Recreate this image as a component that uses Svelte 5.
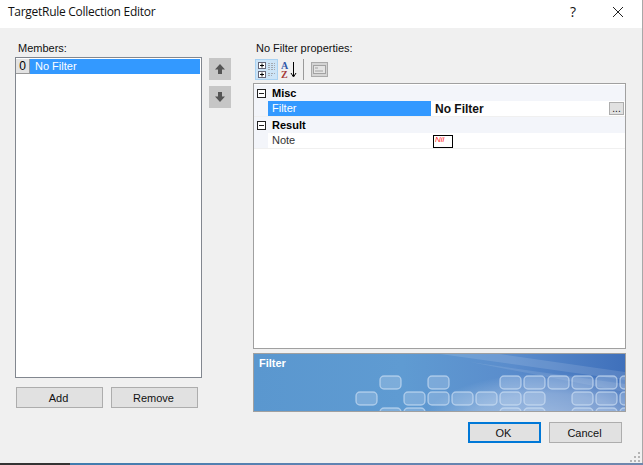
<script>
	let members = [{ index: 0, name: "No Filter" }];

	let groups = [
		{ name: "Misc", rows: [{ label: "Filter", value: "No Filter", selected: true }] },
		{ name: "Result", rows: [{ label: "Note", swatch: "Nil" }] }
	];

	// keys on the description banner, by row
	let keyRows = [
		{ y: 376, xs: [380, 428, 500, 524, 548, 572, 596, 620] },
		{ y: 392, xs: [356, 404, 428, 452, 476, 500, 524, 572, 596, 620] },
		{ y: 408, xs: [380, 404, 500, 524, 572, 596, 620] }
	];

	let grip = [[8, 0], [8, 4], [4, 4], [8, 8], [4, 8], [0, 8]];
</script>

<div class="page">
	<div class="dialog">
		<header class="titlebar">
			<span class="title">TargetRule Collection Editor</span>
			<span class="help">?</span>
			<svg class="close" width="12" height="12" viewBox="0 0 12 12">
				<path d="M1 1 L11 11 M11 1 L1 11" stroke="#222" stroke-width="1" fill="none" />
			</svg>
		</header>

		<div class="body">
			<section class="left">
				<div class="caption">Members:</div>
				<div class="list-row">
					<div class="listbox">
						{#each members as m}
							<div class="member">
								<span class="index">{m.index}</span>
								<span class="member-name">{m.name}</span>
							</div>
						{/each}
					</div>
					<div class="arrows">
						<button class="arrow" aria-label="Up">
							<svg width="12" height="12" viewBox="0 0 12 12"><path d="M6 1 L11 6.5 H8 V11 H4 V6.5 H1 Z" fill="#555" /></svg>
						</button>
						<button class="arrow" aria-label="Down">
							<svg width="12" height="12" viewBox="0 0 12 12"><path d="M6 11 L11 5.5 H8 V1 H4 V5.5 H1 Z" fill="#555" /></svg>
						</button>
					</div>
				</div>
				<div class="list-actions">
					<button class="btn">Add</button>
					<button class="btn">Remove</button>
				</div>
			</section>

			<section class="right">
				<div class="caption props-caption">No Filter properties:</div>
				<div class="toolbar">
					<span class="tool active">
						<svg width="20" height="18" viewBox="0 0 20 18">
							<rect x="1.5" y="1.5" width="7" height="6" fill="#fff" stroke="#667" />
							<path d="M3 4.5 H7 M5 2.5 V6.5" stroke="#000" />
							<rect x="1.5" y="10.5" width="7" height="6" fill="#fff" stroke="#667" />
							<path d="M3 13.5 H7 M5 11.5 V15.5" stroke="#000" />
							<path d="M11 2.5 H18 M11 4.5 H18 M11 6.5 H18 M11 8.5 H18 M11 12.5 H18 M11 14.5 H15" stroke="#a3a9b0" stroke-dasharray="2 1" />
						</svg>
					</span>
					<span class="tool">
						<svg width="18" height="18" viewBox="0 0 18 18">
							<text class="az"><tspan x="0" y="8" class="a">A</tspan><tspan x="0" y="17" class="z">Z</tspan></text>
							<path d="M12.5 1 V15 M10 12 L12.5 16 L15 12" stroke="#000" stroke-width="1" fill="none" />
						</svg>
					</span>
					<span class="tool-sep"></span>
					<span class="tool">
						<svg width="17" height="15" viewBox="0 0 17 15">
							<rect x="0.5" y="0.5" width="16" height="14" fill="#d4d4d4" stroke="#aaa" />
							<rect x="2.5" y="3.5" width="12" height="8" fill="#e4e4e4" stroke="#a2a2a2" />
							<path d="M4 6 H7 M4 9 H12" stroke="#a2a2a2" />
						</svg>
					</span>
				</div>

				<div class="grid">
					{#each groups as g}
						<div class="group">
							<span class="gutter"><span class="minus"></span></span>
							<span class="group-name">{g.name}</span>
						</div>
						{#each g.rows as r}
							<div class="prop">
								<span class="prop-gutter"></span>
								<span class="prop-label" class:selected={r.selected}>{r.label}</span>
								<span class="prop-value">
									{#if r.swatch}
										<span class="swatch">{r.swatch}</span>
									{:else}
										<b>{r.value}</b>
										<span class="ellipsis">...</span>
									{/if}
								</span>
							</div>
						{/each}
					{/each}
				</div>

				<div class="banner">
					<svg class="banner-art" width="371" height="57" viewBox="254 354 371 57">
						<defs>
							<linearGradient id="sky" x1="0" y1="0" x2="1" y2="0">
								<stop offset="0" stop-color="#5a97cf" />
								<stop offset="0.4" stop-color="#5f9bd2" />
								<stop offset="0.7" stop-color="#5a8ccc" />
								<stop offset="1" stop-color="#3f70bb" />
							</linearGradient>
							<radialGradient id="glow" gradientUnits="userSpaceOnUse" cx="550" cy="425" r="130" gradientTransform="translate(0 255) scale(1 0.4)">
								<stop offset="0" stop-color="#fff" stop-opacity="0.45" />
								<stop offset="0.6" stop-color="#fff" stop-opacity="0.3" />
								<stop offset="1" stop-color="#fff" stop-opacity="0" />
							</radialGradient>
						</defs>
						<rect x="254" y="354" width="371" height="57" fill="url(#sky)" />
						<path d="M440 354 L625 380 V372 L500 354 Z" fill="#fff" fill-opacity="0.12" />
						<path d="M470 362 L625 392 V384 Z" fill="#fff" fill-opacity="0.1" />
						<rect x="254" y="354" width="371" height="57" fill="url(#glow)" />
						{#each keyRows as row}
							{#each row.xs as x}
								<rect {x} y={row.y} width="21" height="13" rx="4" fill="#c4d6ee" fill-opacity="0.3" stroke="#d4e5f7" stroke-opacity="0.6" stroke-width="1.4" />
							{/each}
						{/each}
					</svg>
					<span class="banner-title">Filter</span>
				</div>

				<div class="actions">
					<button class="btn primary">OK</button>
					<button class="btn">Cancel</button>
				</div>
			</section>
		</div>

		<svg class="grip" width="10" height="10" viewBox="0 0 10 10">
			{#each grip as [x, y]}
				<rect {x} {y} width="2" height="2" fill="#b5b5b5" />
			{/each}
		</svg>
	</div>
	<div class="strip"></div>
</div>

<style>
	:global(body) {
		margin: 0;
	}

	.page {
		width: 643px;
		height: 465px;
		overflow: hidden;
		background: #a8a8a8;
		font-family: "Liberation Sans", Arial, sans-serif;
		font-size: 11px;
		color: #111;
	}

	.dialog {
		width: 642px;
		height: 463px;
		background: #f0f0f0;
		display: flex;
		flex-direction: column;
		position: relative;
	}

	.titlebar {
		height: 28px;
		background: #fff;
		display: flex;
		align-items: center;
		padding: 0 18px 5px 8px;
		flex: none;
		box-sizing: border-box;
	}

	.title {
		font-family: "Open Sans", sans-serif;
		font-size: 12px;
		letter-spacing: -0.28px;
		flex: 1;
		color: #111;
	}

	.help {
		font-family: "Open Sans", sans-serif;
		font-size: 14px;
		margin-right: 36px;
	}

	.body {
		flex: 1;
		display: flex;
		padding: 14px 15px 0 15px;
	}

	.left {
		width: 216px;
		margin-right: 22px;
	}

	.caption {
		height: 15px;
		padding-left: 3px;
		line-height: 13px;
	}

	.list-row {
		display: flex;
		gap: 7px;
	}

	.listbox {
		width: 185px;
		height: 318px;
		background: #fff;
		border: 1px solid #82878f;
		padding: 1px 0 0 0;
		box-sizing: content-box;
	}

	.member {
		display: flex;
		height: 15px;
		margin-right: 1px;
		background: #3399ff;
		color: #fff;
	}

	.index {
		width: 14px;
		background: #e3e3e3;
		color: #000;
		text-align: center;
		line-height: 15px;
		font-size: 12px;
		box-sizing: border-box;
		border-right: 1px solid #999;
		border-bottom: 1px solid #999;
	}

	.member-name {
		padding-left: 5px;
		line-height: 15px;
	}

	.arrows {
		display: flex;
		flex-direction: column;
		gap: 6px;
		padding-top: 1px;
	}

	.arrow {
		width: 22px;
		height: 22px;
		padding: 0;
		border: none;
		background: #c6c6c6;
		display: flex;
		align-items: center;
		justify-content: center;
	}

	.list-actions {
		display: flex;
		gap: 8px;
		margin-top: 9px;
		padding-left: 1px;
	}

	.btn {
		width: 87px;
		height: 21px;
		padding: 0 2px 0 0;
		background: #e1e1e1;
		border: 1px solid #adadad;
		font: inherit;
		color: #111;
	}

	.right {
		width: 373px;
		display: flex;
		flex-direction: column;
	}

	.props-caption {
		height: 15px;
	}

	.toolbar {
		display: flex;
		align-items: flex-start;
		height: 26px;
		box-sizing: border-box;
		padding: 2px 0 0 2px;
		gap: 2px;
	}

	.tool {
		height: 21px;
		min-width: 20px;
		display: flex;
		align-items: center;
		justify-content: center;
	}

	.tool.active {
		width: 23px;
		background: #cce4f7;
		border: 1px solid #a9d2f2;
		box-sizing: border-box;
	}

	.tool-sep {
		width: 1px;
		height: 21px;
		background: #9a9a9a;
		margin: 0 3px 0 1px;
	}

	.az {
		font-family: "Liberation Serif", serif;
		font-size: 10px;
		font-weight: bold;
	}

	.a {
		fill: #2f57a8;
	}

	.z {
		fill: #a63a3a;
	}

	.grid {
		width: 373px;
		height: 266px;
		box-sizing: border-box;
		background: #fff;
		border: 1px solid #a0a0a0;
		padding-top: 1px;
	}

	.group {
		display: flex;
		align-items: center;
		height: 16px;
		background: #f3f5fa;
	}

	.gutter {
		width: 14px;
		display: flex;
		justify-content: center;
	}

	.minus {
		width: 9px;
		height: 9px;
		border: 1px solid #222;
		box-sizing: border-box;
		background: linear-gradient(#222, #222) center / 5px 1px no-repeat #fff;
	}

	.group-name {
		font-weight: bold;
		padding-left: 4px;
		color: #000;
	}

	.prop {
		display: flex;
		height: 16px;
		border-bottom: 1px solid #f0f0f0;
		box-sizing: border-box;
		background: #fff;
	}

	.prop-gutter {
		width: 14px;
		background: #f3f5fa;
	}

	.prop-label {
		width: 163px;
		padding-left: 4px;
		box-sizing: border-box;
		line-height: 15px;
		color: #333;
	}

	.prop-label.selected {
		background: #3399ff;
		color: #fff;
	}

	.prop-value {
		flex: 1;
		display: flex;
		align-items: center;
		padding-left: 4px;
		font-size: 12px;
		position: relative;
	}

	.ellipsis {
		position: absolute;
		right: 1px;
		top: 1px;
		width: 15px;
		height: 13px;
		box-sizing: border-box;
		background: #e1e1e1;
		border: 1px solid #adadad;
		font-size: 10px;
		line-height: 12px;
		text-align: center;
	}

	.swatch {
		width: 20px;
		height: 13px;
		box-sizing: border-box;
		border: 1px solid #000;
		color: #ff2a2a;
		font-size: 8px;
		font-style: italic;
		line-height: 8px;
		padding-left: 1px;
		margin: 1px 0 0 -2px;
	}

	.banner {
		margin-top: 4px;
		width: 373px;
		height: 59px;
		box-sizing: border-box;
		border: 1px solid #a0a0a0;
		position: relative;
	}

	.banner-art {
		display: block;
	}

	.banner-title {
		position: absolute;
		left: 5px;
		top: 3px;
		color: #fff;
		font-weight: bold;
		font-size: 11px;
	}

	.actions {
		display: flex;
		gap: 8px;
		margin-top: 10px;
		padding-left: 215px;
	}

	.actions .btn {
		width: 73px;
		height: 21px;
	}

	.btn.primary {
		border: 2px solid #0078d7;
	}

	.grip {
		position: absolute;
		right: 2px;
		bottom: 1px;
	}

	.strip {
		height: 2px;
		background: linear-gradient(90deg, #333 70px, #3f7cae 70px, #5f83b2 50%, #6f87ad);
	}
</style>
